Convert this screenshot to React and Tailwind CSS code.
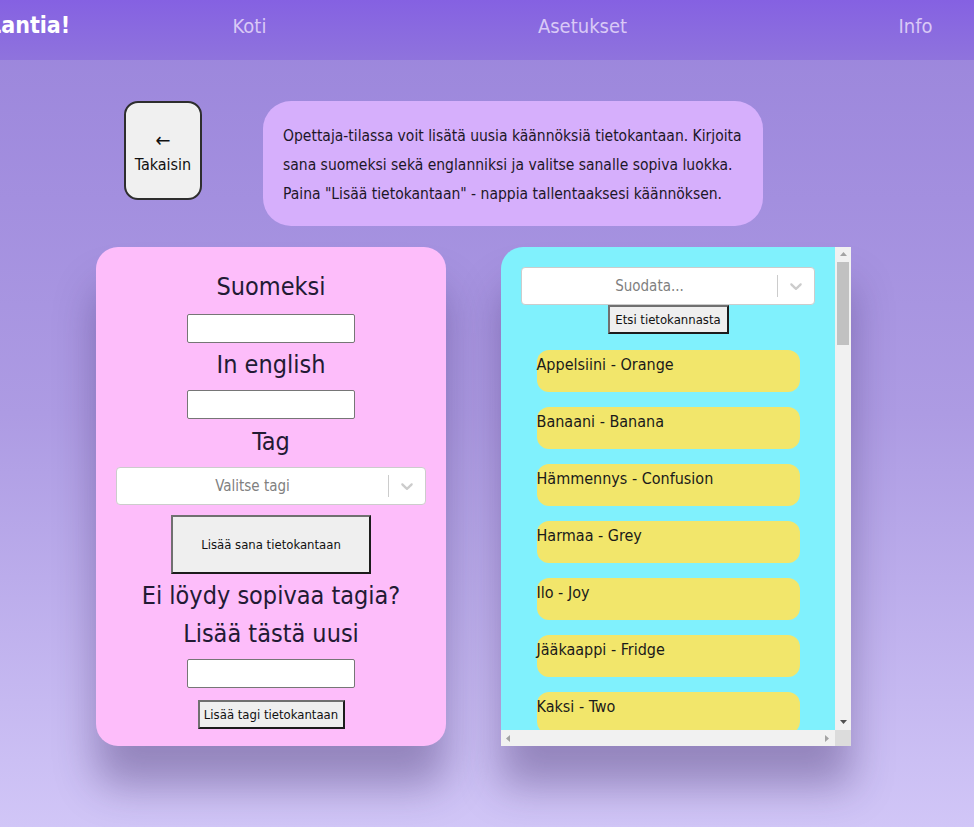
import React from 'react'

const FONT = { fontFamily: '"Liberation Sans Narrow", "DejaVu Sans Condensed", "Roboto Condensed", "Liberation Sans", sans-serif' }

const WORDS = [
  'Appelsiini - Orange',
  'Banaani - Banana',
  'Hämmennys - Confusion',
  'Harmaa - Grey',
  'Ilo - Joy',
  'Jääkaappi - Fridge',
  'Kaksi - Two',
]

function Chevron() {
  return (
    <svg viewBox="0 0 20 20" width="20" height="20" fill="#cccccc" aria-hidden="true">
      <path d="M4.516 7.548c0.436-0.446 1.043-0.481 1.576 0l3.908 3.747 3.908-3.747c0.533-0.481 1.141-0.446 1.574 0 0.436 0.445 0.408 1.197 0 1.615-0.406 0.418-4.695 4.502-4.695 4.502-0.217 0.223-0.502 0.335-0.787 0.335s-0.57-0.112-0.789-0.335c0 0-4.287-4.084-4.695-4.502s-0.436-1.17 0-1.615z" />
    </svg>
  )
}

// small arrow heads for the fake scrollbars
function Tri({ dir, color = '#a3a3a3' }) {
  const pts = {
    up: '1,6 4.5,2 8,6',
    down: '1,2 4.5,6 8,2',
    left: '6,1 2,4.5 6,8',
    right: '2,1 6,4.5 2,8',
  }
  return (
    <svg viewBox="0 0 9 9" width="9" height="9" aria-hidden="true">
      <polygon points={pts[dir]} fill={color} />
    </svg>
  )
}

function Select({ placeholder, className }) {
  return (
    <div className={`shrink-0 flex items-center h-[38px] bg-white border border-[#cccccc] rounded-[4px] ${className}`}>
      <div className="flex-1 text-center text-[15px] text-[#808080]">{placeholder}</div>
      <span className="w-px h-[22px] bg-[#cccccc]" />
      <div className="px-2 flex items-center">
        <Chevron />
      </div>
    </div>
  )
}

function OldButton({ children, className }) {
  return (
    <button
      className={`shrink-0 whitespace-nowrap bg-[#efefef] text-[#111] border-2 border-t-[#707070] border-l-[#707070] border-b-[#1c1c1c] border-r-[#1c1c1c] ${className}`}
    >
      {children}
    </button>
  )
}

function TextInput() {
  return <input className="w-[168px] h-[29px] bg-white border border-[#767676] rounded-[2px]" />
}

export default function App() {
  return (
    <div
      style={FONT}
      className="min-h-[827px] overflow-hidden bg-gradient-to-b from-[#9a84db] via-[#ad9be3] to-[#d1c6f7]"
    >
      <header className="h-[60px] pb-[9px] flex items-center overflow-hidden bg-gradient-to-b from-[#8561e2] to-[#8f73dd]">
        <div className="w-[83px] shrink-0 -ml-[12px] text-white font-bold text-[23px]">Lantia!</div>
        <a className="w-[333px] shrink-0 text-center text-[20px] text-[#d9c9f6] ml-[12px]">Koti</a>
        <a className="w-[333px] shrink-0 text-center text-[20px] text-[#d9c9f6]">Asetukset</a>
        <a className="w-[333px] shrink-0 text-center text-[20px] text-[#d9c9f6]">Info</a>
      </header>

      <div className="flex items-start gap-[61px] pl-[124px] mt-[41px]">
        <button className="w-[78px] h-[99px] flex flex-col items-center justify-center bg-[#f0f0f0] border-2 border-[#2e2e2e] rounded-[14px] text-[#111]">
          <span className="text-[20px] leading-[28px]">←</span>
          <span className="text-[16px] leading-[22px]">Takaisin</span>
        </button>
        <div className="w-[500px] h-[125px] bg-[#d6affc] rounded-[28px] pl-5 pt-[21px] text-[15.5px] leading-[29px] text-[#1d1728]">
          <span className="block whitespace-nowrap">Opettaja-tilassa voit lisätä uusia käännöksiä tietokantaan. Kirjoita</span>
          <span className="block whitespace-nowrap">sana suomeksi sekä englanniksi ja valitse sanalle sopiva luokka.</span>
          <span className="block whitespace-nowrap">Paina "Lisää tietokantaan" - nappia tallentaaksesi käännöksen.</span>
        </div>
      </div>

      <div className="flex items-start gap-[55px] pl-[96px] mt-[21px]">
        <section className="w-[350px] h-[499px] bg-[#fdbdfa] rounded-[22px] shadow-[0_40px_40px_rgba(50,30,90,0.35)] flex flex-col items-center pt-5 text-[#221a34]">
          <h2 className="text-[25px] leading-[40px]">Suomeksi</h2>
          <div className="mt-[7px]"><TextInput /></div>
          <h2 className="text-[25px] leading-[40px] mt-[2px]">In english</h2>
          <div className="mt-[5px]"><TextInput /></div>
          <h2 className="text-[25px] leading-[40px] mt-[3px]">Tag</h2>
          <Select placeholder="Valitse tagi" className="w-[310px] mt-[5px]" />
          <OldButton className="w-[200px] h-[59px] mt-[10px] text-[13px]">Lisää sana tietokantaan</OldButton>
          <h2 className="text-[25px] leading-[38px] mt-[3px]">Ei löydy sopivaa tagia?</h2>
          <h2 className="text-[25px] leading-[38px]">Lisää tästä uusi</h2>
          <div className="mt-[6px]"><TextInput /></div>
          <OldButton className="w-[147px] h-[29px] mt-[12px] text-[13px]">Lisää tagi tietokantaan</OldButton>
        </section>

        <section className="w-[350px] h-[499px] rounded-tl-[22px] overflow-hidden flex flex-col shadow-[0_40px_40px_rgba(50,30,90,0.35)]">
          <div className="flex flex-1 min-h-0">
            <div className="flex-1 overflow-hidden bg-[#80f1fd] px-5 pt-5 flex flex-col items-center">
              <Select placeholder="Suodata..." className="w-full" />
              <OldButton className="w-[121px] h-[29px] text-[13px]">Etsi tietokannasta</OldButton>
              <ul className="mt-4 flex flex-col gap-[15px]">
                {WORDS.map((w) => (
                  <li key={w} className="w-[263px] h-[42px] shrink-0 bg-[#f2e66b] rounded-[12px] text-[16px] leading-[30px] text-[#1a1a1a]">
                    {w}
                  </li>
                ))}
              </ul>
            </div>
            <div className="w-4 bg-[#f1f1f1] flex flex-col items-center">
              <div className="h-[15px] flex items-center"><Tri dir="up" /></div>
              <div className="w-[12px] h-[83px] bg-[#c1c1c1]" />
              <div className="flex-1" />
              <div className="h-[15px] flex items-center"><Tri dir="down" color="#505050" /></div>
            </div>
          </div>
          <div className="h-4 flex">
            <div className="flex-1 bg-[#f1f1f1] flex items-center justify-between px-[3px]">
              <Tri dir="left" />
              <Tri dir="right" />
            </div>
            <div className="w-4 bg-[#dcdcdc]" />
          </div>
        </section>
      </div>
    </div>
  )
}
